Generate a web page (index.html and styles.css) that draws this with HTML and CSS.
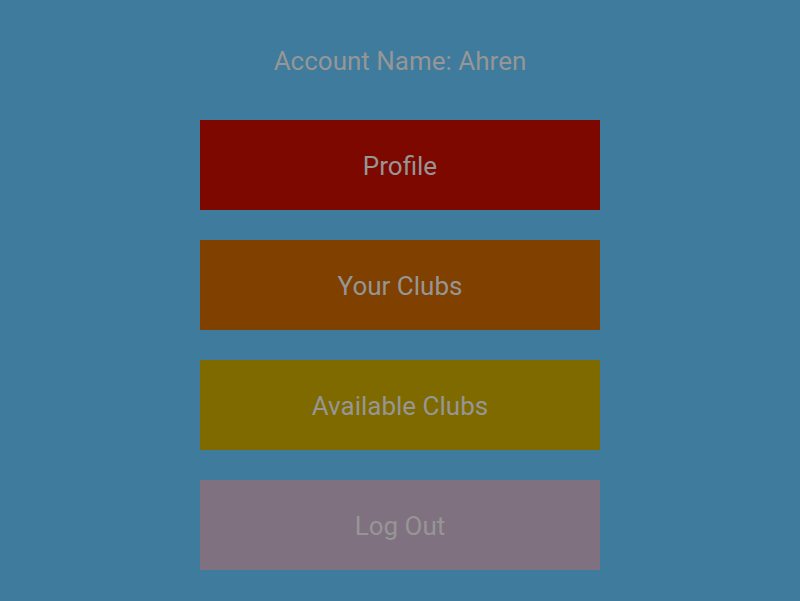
FILE: index.html
```html
<!DOCTYPE html>
<html>
<head>
<meta charset="utf-8">
<link rel="stylesheet" href="styles.css">
</head>
<body>
<div class="screen">
  <div class="title">Account Name: Ahren</div>
  <div class="menu">
    <div class="btn btn-profile">Profile</div>
    <div class="btn btn-clubs">Your Clubs</div>
    <div class="btn btn-available">Available Clubs</div>
    <div class="btn btn-logout">Log Out</div>
  </div>
</div>
</body>
</html>
```
FILE: styles.css
```css
html, body {
  margin: 0;
  padding: 0;
  background: #3e7b9d;
}
.screen {
  width: 800px;
  height: 601px;
  display: flex;
  flex-direction: column;
  align-items: center;
  padding-top: 46px;
  box-sizing: border-box;
  font-family: Roboto, "Liberation Sans", sans-serif;
  color: #969696;
}
.title {
  font-size: 26px;
  line-height: 30px;
  margin-bottom: 44px;
}
.menu {
  display: flex;
  flex-direction: column;
  gap: 30px;
}
.btn {
  width: 400px;
  height: 90px;
  display: flex;
  align-items: center;
  justify-content: center;
  font-size: 26px;
  padding-top: 2px;
  box-sizing: border-box;
}
.btn-profile { background: #7d0800; }
.btn-clubs { background: #7f4000; }
.btn-available { background: #7f6a00; }
.btn-logout { background: #7f717f; }
```
